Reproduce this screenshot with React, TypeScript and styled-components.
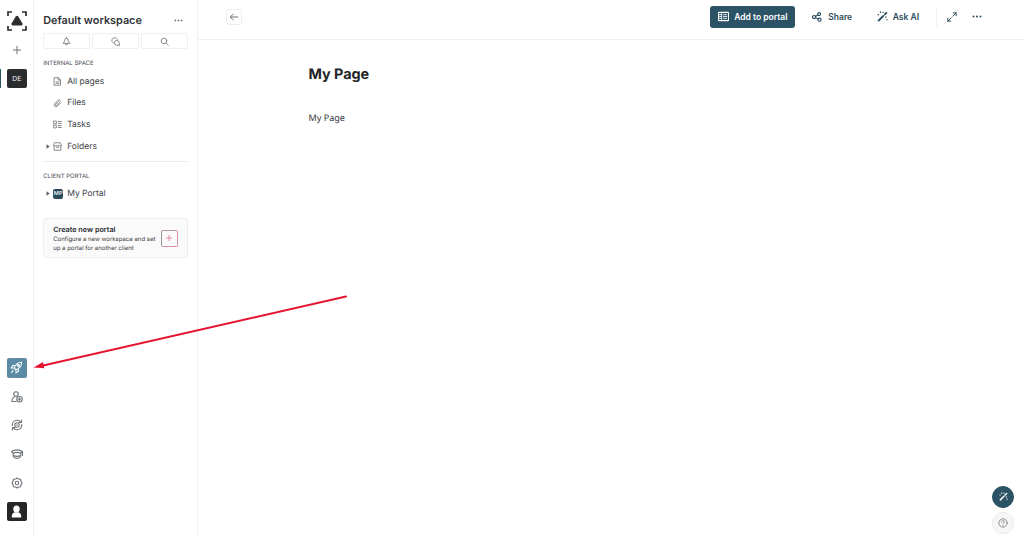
import React from "react";
import styled, { createGlobalStyle } from "styled-components";

const GlobalStyle = createGlobalStyle`
  * { box-sizing: border-box; }
  body { margin: 0; background: #fff; color: #34383d; font-family: Inter, "Liberation Sans", sans-serif; text-rendering: geometricPrecision; }
  button { font: inherit; color: inherit; background: none; border: 0; padding: 0; margin: 0; }
  svg { display: block; flex: none; }
  h1, h2, h3, p { margin: 0; }
`;

const Shell = styled.div`
  position: relative;
  display: flex;
  width: 1024px;
  height: 536px;
  overflow: hidden;
`;

const Rail = styled.nav`
  width: 34px;
  height: 100%;
  padding: 11px 0 15px 7px;
  border-right: 1px solid #f0f0f0;
  display: flex;
  flex-direction: column;
  justify-content: space-between;
`;

const RailGroup = styled.div<{ $gap: number }>`
  display: flex;
  flex-direction: column;
  gap: ${(p) => p.$gap}px;
`;

const RailButton = styled.button<{ $bg?: string }>`
  display: flex;
  align-items: center;
  justify-content: center;
  width: 19.5px;
  height: 19.5px;
  border-radius: 2px;
  background: ${(p) => p.$bg ?? "transparent"};
  color: ${(p) => (p.$bg ? "#fff" : "#6f7479")};
  font-size: 6.8px;
`;

const ActiveWorkspace = styled.div`
  position: relative;
  &::before {
    content: "";
    position: absolute;
    left: -7px;
    top: 0;
    width: 1px;
    height: 19px;
    background: #2c5265;
  }
`;

const Sidebar = styled.aside`
  width: 164px;
  height: 100%;
  padding: 13px 9.5px 0 9.2px;
  border-right: 1px solid #f0f0f0;
`;

const SidebarHead = styled.div`
  display: flex;
  align-items: center;
  justify-content: space-between;
  height: 14px;
  padding-right: 4.5px;
  color: #777;
`;

const WorkspaceName = styled.h2`
  font-size: 10.85px;
  line-height: 14px;
  font-weight: 600;
  color: #303338;
  white-space: nowrap;
`;

const QuickBar = styled.div`
  display: grid;
  grid-template-columns: 47px 47px 47px;
  gap: 2px;
  margin-top: 6px;
`;

const QuickButton = styled.button`
  display: flex;
  align-items: center;
  justify-content: center;
  height: 16px;
  border: 1px solid #f0f0f0;
  border-radius: 2px;
  color: #777c80;
`;

const SectionLabel = styled.h3<{ $top: number }>`
  margin-top: ${(p) => p.$top}px;
  font-size: 6px;
  line-height: 8px;
  font-weight: 400;
  color: #45494d;
`;

const NavList = styled.div<{ $top: number }>`
  margin-top: ${(p) => p.$top}px;
`;

const NavItem = styled.div`
  display: flex;
  align-items: center;
  height: 21.6px;
  font-size: 8.5px;
  color: #3d4145;
`;

const Caret = styled.span<{ $shown?: boolean }>`
  width: 10px;
  padding-left: 3px;
  color: #5c6064;
  visibility: ${(p) => (p.$shown ? "visible" : "hidden")};
`;

const NavIcon = styled.span`
  width: 14px;
  color: #74797e;
`;

const PortalBadge = styled.span`
  display: flex;
  align-items: center;
  justify-content: center;
  width: 10px;
  height: 10px;
  margin-right: 4px;
  border-radius: 2px;
  background: #2c4c5e;
  color: #fff;
  font-size: 5.6px;
  font-weight: 500;
`;

const Divider = styled.hr`
  height: 1px;
  margin: 4px 0 0;
  border: 0;
  background: #ececec;
`;

const PortalCard = styled.div`
  display: flex;
  align-items: center;
  justify-content: space-between;
  height: 40px;
  margin-top: 14px;
  padding: 0 9px;
  border: 1px solid #eeeeee;
  border-radius: 3px;
  background: #fafafa;
`;

const CardCopy = styled.div`
  padding-top: 1.5px;
`;

const CardTitle = styled.h3`
  font-size: 7.25px;
  line-height: 10px;
  font-weight: 600;
  color: #282b2e;
`;

const CardText = styled.p`
  font-size: 6px;
  line-height: 9px;
  color: #3c4044;
  white-space: nowrap;
`;

const CardAdd = styled.button`
  display: flex;
  align-items: center;
  justify-content: center;
  width: 17px;
  height: 17px;
  border: 1px solid #db90a2;
  border-left-color: #98939b;
  border-top-color: #b797a2;
  border-radius: 2px;
  color: #dd7890;
`;

const Main = styled.main`
  flex: 1;
`;

const TopBar = styled.header`
  display: flex;
  align-items: center;
  justify-content: space-between;
  height: 40px;
  padding: 0 42px 6px 28px;
  border-bottom: 1px solid #f0f0f0;
`;

const BackButton = styled.button`
  display: flex;
  align-items: center;
  justify-content: center;
  width: 16px;
  height: 16px;
  border: 1px solid #eeeeee;
  border-radius: 3px;
  color: #666b70;
`;

const Actions = styled.div`
  display: flex;
  align-items: center;
  height: 22px;
  color: #2c4c5e;
`;

const Action = styled.button<{ $primary?: boolean; $left?: number; $gap?: number }>`
  display: flex;
  align-items: center;
  gap: ${(p) => p.$gap ?? 5}px;
  height: 22px;
  margin-left: ${(p) => p.$left ?? 0}px;
  padding: ${(p) => (p.$primary ? "0 7px 0 8px" : "0")};
  width: ${(p) => (p.$primary ? "85px" : "auto")};
  border-radius: 3px;
  background: ${(p) => (p.$primary ? "#2c5265" : "transparent")};
  color: ${(p) => (p.$primary ? "#fff" : "#2c4c5e")};
  font-size: 8.5px;
  font-weight: 600;
  white-space: nowrap;
`;

const Separator = styled.span`
  width: 1px;
  height: 20px;
  margin: 0 10px 0 17px;
  background: #f0f0f0;
`;

const PageBody = styled.article`
  padding: 26px 0 0 110.4px;
`;

const PageTitle = styled.h1`
  font-size: 14.4px;
  line-height: 18px;
  font-weight: 700;
  color: #222528;
`;

const PageText = styled.p`
  margin-top: 27px;
  font-family: "Noto Sans", sans-serif;
  font-size: 9.1px;
  line-height: 14px;
  color: #34383c;
`;

const FloatingTools = styled.div`
  position: absolute;
  right: 10px;
  bottom: 2.5px;
  display: flex;
  flex-direction: column;
  gap: 4px;
`;

const RoundButton = styled.button<{ $dark?: boolean }>`
  display: flex;
  align-items: center;
  justify-content: center;
  width: 22px;
  height: 22px;
  border-radius: 50%;
  border: 1px solid ${(p) => (p.$dark ? "#2c5265" : "#eaeaea")};
  background: ${(p) => (p.$dark ? "#2c5265" : "#f7f7f7")};
  color: ${(p) => (p.$dark ? "#fff" : "#85898c")};
`;

const Pointer = styled.svg`
  position: absolute;
  left: -1px;
  top: 280px;
  pointer-events: none;
`;

type IconProps = { size?: number; stroke?: number; children: React.ReactNode };
const Icon = ({ size = 10, stroke = 2.3, children }: IconProps) => (
  <svg width={size} height={size} viewBox="0 0 24 24" fill="none" stroke="currentColor" strokeWidth={stroke} strokeLinecap="round" strokeLinejoin="round">
    {children}
  </svg>
);

const Logo = () => (
  <svg width="20" height="20" viewBox="0 0 20 20" fill="none" stroke="#2b2d2f" strokeWidth="1.7">
    <path d="M1 5V1h4M15 1h4v4M19 15v4h-4M5 19H1v-4" />
    <path d="M8.700 5.500q1.300-1.600 2.600 0l4 6.800q.9 2.200-1.300 2.200H6q-2.200 0-1.300-2.200Z" fill="#2b2d2f" stroke="none" />
  </svg>
);

const Dots = ({ size = 10 }: { size?: number }) => (
  <svg width={size} height="3" viewBox="0 0 10 3" fill="currentColor">
    <circle cx="1.500" cy="1.500" r="1" />
    <circle cx="5" cy="1.500" r="1" />
    <circle cx="8.500" cy="1.500" r="1" />
  </svg>
);

const Wand = ({ size = 12 }: { size?: number }) => (
  <svg width={size} height={size} viewBox="0 0 24 24" fill="none" stroke="currentColor" strokeLinecap="round">
    <path d="M3.500 21 13 11.500M17 7.500 20.500 4" strokeWidth="4" />
    <path d="m13 11.500 4-4" strokeWidth="2" />
    <path d="M7.500 2v1M2.500 8h.8M19.500 13v.8M21.500 19h.3M13 3h.2" strokeWidth="2.800" />
  </svg>
);

const CaretGlyph = () => (
  <svg width="4" height="5" viewBox="0 0 4 5" fill="currentColor">
    <path d="M.5.300 3.700 2.500.5 4.700Z" />
  </svg>
);

export default function App() {
  return (
    <>
      <GlobalStyle />
      <Shell>
        <Rail>
          <RailGroup $gap={9.3}>
            <RailButton><Logo /></RailButton>
            <RailButton><Icon size={10} stroke={2.4}><path d="M12 3v18M3 12h18" /></Icon></RailButton>
            <ActiveWorkspace><RailButton $bg="#2b2c2d">DE</RailButton></ActiveWorkspace>
          </RailGroup>
          <RailGroup $gap={9.2}>
            <RailButton $bg="#5c8ba5">
              <Icon size={13} stroke={1.9}>
                <path d="M8 13C10 7 14 2.500 21.500 2.500 21.500 10 17 14 11 16Z" />
                <path d="M9 8.500H5l-3 4.500h6M15.500 15v4L11 22v-6M6 17l-3.500 4.500" />
                <circle cx="15.500" cy="8.500" r="1.800" />
              </Icon>
            </RailButton>
            <RailButton>
              <Icon size={12} stroke={2.3}>
                <circle cx="10" cy="6" r="4.500" />
                <path d="M10 21H2v-3c0-3 2-5 5-6.500" />
                <circle cx="17" cy="16.500" r="5.500" />
                <path d="M17 14v5M14.500 16.500h5" />
              </Icon>
            </RailButton>
            <RailButton>
              <Icon size={12} stroke={2.2}>
                <path d="M2.500 13C2 7 6 2.500 12 2.500c3.500 0 6 1.500 8 4M21.500 11c.5 6-3.500 10.500-9.500 10.500-3.500 0-6-1.500-8-4M21 2v5h-5M3 22v-5h5" />
                <circle cx="12" cy="12" r="4.500" /><circle cx="12" cy="12" r=".5" />
              </Icon>
            </RailButton>
            <RailButton>
              <Icon size={12} stroke={2.2}>
                <path d="M1 7.500c5-5 17-5 22 0M1 7.500l4 3c4-2 10-2 14 0l4-3M4.500 10.500V17c3 5 12 5 15 0v-6.500M23 8v7M5 15c4 2 10 2 14 0" />
              </Icon>
            </RailButton>
            <RailButton>
              <Icon size={12} stroke={2.2}>
                <path d="m12 2 3 2 4 .5 1 4 2 3.500-2 3.500-1 4-4 .5-3 2-3-2-4-.5-1-4L2 12l2-3.500 1-4L9 4Z" />
                <circle cx="12" cy="12" r="3.500" />
              </Icon>
            </RailButton>
            <RailButton $bg="#252627">
              <svg width="11" height="13" viewBox="0 0 11 13" fill="#fff">
                <ellipse cx="5.500" cy="3.900" rx="3.200" ry="3.500" />
                <path d="M.8 12.500V11q0-2.700 3-3.700h3.400q3 1 3 3.700v1.500Z" />
              </svg>
            </RailButton>
          </RailGroup>
        </Rail>

        <Sidebar>
          <SidebarHead>
            <WorkspaceName>Default workspace</WorkspaceName>
            <Dots size={9} />
          </SidebarHead>
          <QuickBar>
            <QuickButton>
              <Icon size={9}><path d="M12 2C8 3 8 7 7 11l-4 6h18l-4-6c-1-4-1-8-5-9ZM9 18c0 5 6 5 6 0" /></Icon>
            </QuickButton>
            <QuickButton>
              <Icon size={9}>
                <path d="M6 16C-1 12 2 2 10 2c4 0 6 2 7 4" />
                <path d="M22 22h-6.500a6.500 6.500 0 1 1 6.500-6.500Z" />
              </Icon>
            </QuickButton>
            <QuickButton>
              <Icon size={9}><circle cx="10.500" cy="10.500" r="7.500" /><path d="m16 16 6 6" /></Icon>
            </QuickButton>
          </QuickBar>

          <SectionLabel $top={11}>INTERNAL SPACE</SectionLabel>
          <NavList $top={3}>
            <NavItem>
              <Caret />
              <NavIcon><Icon size={9}><path d="M4 2h10l6 6v14H4ZM14 2v6h6M8 13h8M8 17h8" /></Icon></NavIcon>
              All pages
            </NavItem>
            <NavItem>
              <Caret />
              <NavIcon><Icon size={9}><path d="m20 11-8 8c-5 5-12-2-7-7l8-8c4-4 9 1 5 5l-8 8c-2 2-5-1-3-3l7-7" /></Icon></NavIcon>
              Files
            </NavItem>
            <NavItem>
              <Caret />
              <NavIcon><Icon size={9}><path d="M2 3h7v7H2ZM2 14h7v7H2ZM14 4h8M14 9h8M14 15h8M14 20h8" /></Icon></NavIcon>
              Tasks
            </NavItem>
            <NavItem>
              <Caret $shown><CaretGlyph /></Caret>
              <NavIcon><Icon size={9}><path d="M5 2h14l3 5v3H2V7ZM3 10v12h18V10M9 14h6" /></Icon></NavIcon>
              Folders
            </NavItem>
          </NavList>
          <Divider />
          <SectionLabel $top={10.6}>CLIENT PORTAL</SectionLabel>
          <NavList $top={1.8}>
            <NavItem>
              <Caret $shown><CaretGlyph /></Caret>
              <PortalBadge>MP</PortalBadge>
              My Portal
            </NavItem>
          </NavList>
          <PortalCard>
            <CardCopy>
              <CardTitle>Create new portal</CardTitle>
              <CardText>Configure a new workspace and set<br />up a portal for another client</CardText>
            </CardCopy>
            <CardAdd><Icon size={8} stroke={2.5}><path d="M12 4v16M4 12h16" /></Icon></CardAdd>
          </PortalCard>
        </Sidebar>

        <Main>
          <TopBar>
            <BackButton><Icon size={10}><path d="M21 12H4M10 5l-7 7 7 7" /></Icon></BackButton>
            <Actions>
              <Action $primary $gap={5.5}>
                <Icon size={11}>
                  <rect x="1" y="3" width="22" height="18" rx="1" />
                  <path d="M2 8h5M2 12h5M2 16h5M8 4v16M12 8h7M12 12h7M12 16h7" strokeWidth="1.800" />
                </Icon>
                Add to portal
              </Action>
              <Action $left={17.6} $gap={6}>
                <Icon size={10} stroke={2.8}>
                  <circle cx="5" cy="12" r="3.700" /><circle cx="17" cy="5" r="3.500" /><circle cx="18" cy="18.500" r="3.700" />
                  <path d="m9 10 5-3M9 14l5 2" />
                </Icon>
                Share
              </Action>
              <Action $left={24.6} $gap={5}><Wand size={11} />Ask AI</Action>
              <Separator />
              <Icon size={10}><path d="m14 10 8-8M15 2h7v7M10 14l-8 8M2 15v7h7" /></Icon>
              <Action $left={15}><Dots /></Action>
            </Actions>
          </TopBar>
          <PageBody>
            <PageTitle>My Page</PageTitle>
            <PageText>My Page</PageText>
          </PageBody>
        </Main>

        <FloatingTools>
          <RoundButton $dark><Wand size={9} /></RoundButton>
          <RoundButton>
            <Icon size={10}><circle cx="12" cy="12" r="10" /><path d="M8.500 9.500c0-5 7-4 7 0 0 2-3.500 2-3.500 4M12 17.500v.2" /></Icon>
          </RoundButton>
        </FloatingTools>

        <Pointer width="360" height="100" viewBox="0 0 360 100">
          <path d="M347 16.500 42 86" stroke="#e51532" strokeWidth="2" strokeLinecap="round" />
          <path d="m34.500 87.500 9.500-5.500 1.300 6.200Z" fill="#e51532" />
        </Pointer>
      </Shell>
    </>
  );
}
